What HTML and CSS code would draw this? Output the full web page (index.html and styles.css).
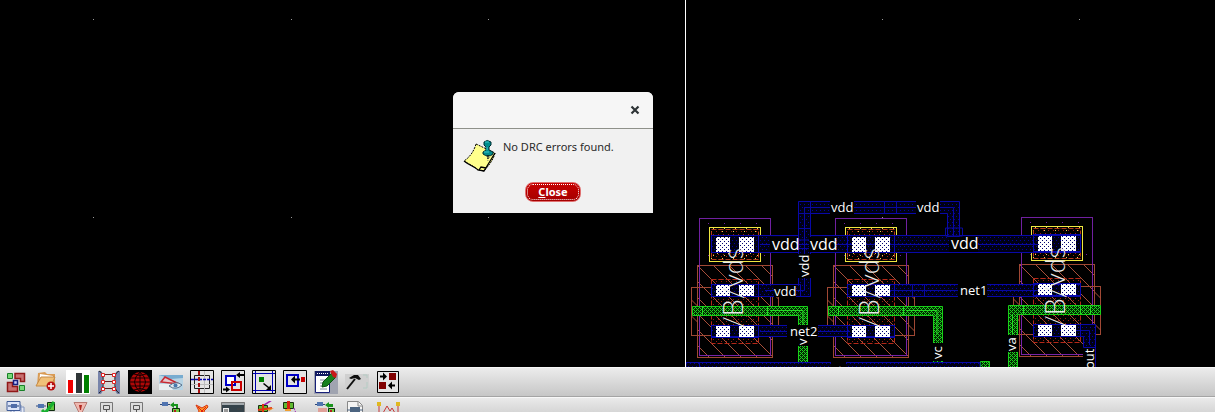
FILE: index.html
```html
<!DOCTYPE html>
<html lang="en">
<head>
<meta charset="utf-8">
<title>Layout editor</title>
<link rel="stylesheet" href="styles.css">
</head>
<body>
<main class="workspace">
  <section class="pane pane-left" aria-label="Layout view">
    <svg class="canvas" width="685" height="367" viewBox="0 0 685 367">
      <path class="grid" d="M93 19.500h1M291 19.500h1M488 19.500h1M93 217.500h1M291 217.500h1M488 217.500h1"/>
    </svg>
    <div class="dialog" role="dialog" aria-labelledby="message">
      <header class="dialog-head">
        <button class="dismiss" aria-label="Dismiss"><svg width="10" height="10" viewBox="0 0 10 10"><path d="M1.5 1.5l7 7M8.500 1.500l-7 7" stroke="#2e3436" stroke-width="2.200"/></svg></button>
      </header>
      <div class="dialog-body">
        <svg class="note" width="34" height="34" viewBox="0 0 34 34">
          <path d="M13 5L32 14C30 22 25 27 21 32L15 31C11 27 5 25 1 22C7 18 11 12 13 5Z" fill="#ffff8c" stroke="#000" stroke-dasharray="2 1"/>
          <path d="M1 22C6 26 12 28 15 31L21 32L32 14M16 31l2-3 5 1" fill="none" stroke="#000" stroke-width="1.300"/>
          <path d="M24 17l1 5M26 17l4-2M25 20l4-4" stroke="#777" stroke-dasharray="1 1"/>
          <path d="M21 3q3-3 7 0v3l-2 2v3l4 2v2q-5 4-10 0v-2l3-2V8l-2-2Z" fill="#008c8c" stroke="#002c30"/>
          <path d="M22 3h4M21 13h5M24 8v3" stroke="#38c8cc"/><path d="M25 16v4" stroke="#000"/>
        </svg>
        <p id="message">No DRC errors found.</p>
      </div>
      <footer class="dialog-foot"><button class="close"><span><u>C</u>lose</span></button></footer>
    </div>
  </section>
  <section class="pane pane-right" aria-label="Cell view">
    <svg class="canvas" width="529" height="367" viewBox="686 0 529 367">
      <defs>
        <pattern id="bluedots" width="4" height="6" patternUnits="userSpaceOnUse"><rect width="4" height="6" fill="#000014"/><path d="M0 .5h1M2 3.500h1" stroke="#0000a0"/></pattern>
        <pattern id="greendots" width="4" height="4" patternUnits="userSpaceOnUse"><rect width="4" height="4" fill="#002800"/><path d="M0 .5h1M2 .5h1M1 1.500h1M0 2.500h1M2 2.500h1M3 3.500h1" stroke="#20d020"/></pattern>
        <pattern id="whitedots" width="4" height="4" patternUnits="userSpaceOnUse"><rect width="4" height="4" fill="#fff"/><path d="M0 1.500h1M2 3.500h1" stroke="#000070"/></pattern>
        <pattern id="reddots" width="5" height="5" patternUnits="userSpaceOnUse"><path d="M1 1.500h1M3 4.500h1" stroke="#9c1c10"/></pattern>
        <pattern id="yellowdots" width="11" height="9" patternUnits="userSpaceOnUse"><path d="M2 1.500h1M7 6.500h1M9 3.500h1" stroke="#e8d060"/></pattern>
        <pattern id="hatch" width="16" height="16" patternUnits="userSpaceOnUse"><path d="M-1-1L17 17M-1 15L1 17M15-1L17 1" stroke="#a8503a"/></pattern>
        <g id="device">
          <rect x="699.5" y="218.5" width="71" height="137" fill="none" stroke="#7020a0"/>
          <path d="M708 223.500h1M724 223.500h1M740 223.500h1M756 223.500h1M708 255.500h1M764 255.500h1" stroke="#7020a0"/>
          <rect x="697.5" y="265.5" width="75" height="92" fill="url(#hatch)" stroke="#a04834"/>
          <path d="M699.500 265V355.500H770.500V265" fill="none" stroke="#7824a8"/>
          <rect x="691.5" y="287.500" width="87" height="48" fill="none" stroke="#a04834"/>
          <path d="M691.500 300l6 6M691.500 316l6 6M772.500 293l6 6M772.500 309l6 6M772.500 325l6 6" stroke="#a8503a"/>
          <rect x="711.5" y="279.500" width="47" height="64" fill="url(#reddots)" stroke="#b42818" stroke-dasharray="5 2"/>
          <rect x="709.5" y="227.500" width="51" height="34" fill="url(#yellowdots)" stroke="#f0e840"/>
          <rect x="711.5" y="229.500" width="47" height="30" fill="url(#reddots)" stroke="#b43818" stroke-dasharray="5 2"/>
        </g>
        <g id="contacts">
          <path d="M716 237h14v15h-14zM739 237h15v15h-15zM716 285h14v12h-14zM739 285h15v12h-15zM716 325h14v13h-14zM739 325h15v13h-15z" fill="url(#whitedots)"/>
          <rect x="711.500" y="235.500" width="47" height="17" class="wire-outline"/>
          <rect x="711.500" y="284.500" width="47" height="12" class="wire-outline"/>
          <rect x="711.500" y="325.500" width="47" height="12" class="wire-outline"/>
          <text class="cell" transform="translate(743 328) rotate(-90)">/B/vds</text>
        </g>
      </defs>
      <path class="grid" d="M882 19.500h1M1079 19.500h1M882 217.500h1M1079 217.500h1"/>
      <use href="#device"/><use href="#device" x="136"/><use href="#device" x="322" y="-1"/>
      <g class="poly">
        <path d="M692.500 306.500H807.500V368H798.500V315.500H692.500Z"/>
        <path d="M828.500 306.500H942.500V368H933.500V315.500H828.500Z"/>
        <path d="M1008.500 305.500H1100.500V314.500H1017.500V368H1008.500Z"/>
        <path d="M980.500 361.500h9v7h-9z"/>
      </g>
      <path d="M702.500 306v9M767.500 306v9M838.500 306v9M903.500 306v9M1023.500 305v9M1080.500 305v9M1090.500 305v9M770 310.500h33v24M907 310.500h30v24M1012.500 314v20" fill="none" stroke="#24dc24"/>
      <g class="metal">
        <path d="M711.500 235.500H1080.500V252.500H711.500Z"/>
        <path d="M798.500 201.500H959.500V236.500H947.500V213.500H810.500V296.500H798.500Z"/>
        <path d="M711.500 284.500H800.500V296.500H711.500ZM847.500 284.500H1080.500V296.500H847.500Z"/>
        <path d="M711.500 325.500H894.500V336.500H711.500Z"/>
        <path d="M1033.500 324.500H1095.500V347.500H1083.500V336.500H1033.500Z"/>
        <path d="M686 362.500H980V368H686Z"/>
      </g>
      <path class="center" d="M804.500 207V290.500H765M804.500 207.500H953.500V240M760 244.500H1040M890 290.500H1040M760 331.500H850M1075 330.500H1089.500V345M884.500 201v12M896.500 201v12M810.500 213V201M798.500 213.500h12M798.500 228.500h12M945.500 228h17v8h-17zM912.500 284v12M924.500 284v12M798.500 240h12M798.500 248.500h12M1095.500 347v20M699.500 362v5"/>
      <use href="#contacts"/><use href="#contacts" x="136"/><use href="#contacts" x="322" y="-1"/>
      <path fill="#000" d="M830 201h24v13h-24zM916 201h24v13h-24zM770 237h28v15h-28zM809 237h27v15h-27zM949 237h29v15h-29zM798 254h13v24h-13zM774 285h22v12h-22zM958 284h29v13h-29zM787 325h31v13h-31zM797 335h12v11h-12zM932 343h12v18h-12zM1007 335h12v17h-12zM1083 348h12v19h-12zM831 362h15v6h-15z"/>
      <g class="net">
        <text x="831" y="212">vdd</text><text x="917" y="212">vdd</text>
        <text class="wide" x="772" y="250">vdd</text><text class="wide" x="810" y="250">vdd</text><text class="wide" x="951" y="249">vdd</text>
        <text x="774" y="296">vdd</text><text x="960" y="295">net1</text><text x="790" y="336">net2</text>
        <text transform="translate(809 277) rotate(-90)">vdd</text>
        <text transform="translate(807 345) rotate(-90)">v</text>
        <text transform="translate(942 359) rotate(-90)">vc</text>
        <text transform="translate(1016 351) rotate(-90)">va</text>
        <text transform="translate(1094 369) rotate(-90)">out</text>
        <text x="838" y="375">t</text>
      </g>
    </svg>
  </section>
</main>

<nav class="toolbar" aria-label="Layout tools">
  <button aria-label="Hierarchy"><svg viewBox="0 0 25 25"><path d="M12 3.500h9.500v8h-4v-3H12zM4.500 12.500h5v4h5v5h-10z" fill="#c87070" stroke="#901818" stroke-width="1.500"/><path d="M4.500 3.500h5v5h-5zM16.500 15.500h5v5h-5z" fill="#78d878" stroke="#188028"/><path d="M10.500 10.500h4v4h-4z" fill="#c8ccff" stroke="#182080" stroke-width="1.500"/></svg></button>
  <button aria-label="Add folder"><svg viewBox="0 0 25 25"><path d="M3 16L4 3l7-1 2 2h8v11z" fill="#d99b54"/><path d="M6 4l13 2v9H5z" fill="#fff"/><path d="M2 16L7 7h14l-4 9z" fill="#f0c078" stroke="#c48a46"/><circle cx="17" cy="16" r="4.500" fill="#b81010"/><path d="M14 16h6M17 13v6" stroke="#fff" stroke-width="1.500"/></svg></button>
  <button aria-label="Statistics"><svg viewBox="0 0 25 25"><path d="M1 0h24v24H1z" fill="#fff"/><path d="M3 10h5v13H3z" fill="#f00000"/><path d="M11 3h6v20h-6z" fill="#303638"/><path d="M19 5h5v18h-5z" fill="#008000"/></svg></button>
  <button aria-label="Connectivity"><svg viewBox="0 0 25 25"><path d="M2 1h3l3 4-2 7 2 7-3 5H2zM24 1h-3l-3 4 2 7-2 7 3 5h3z" fill="#7884aa"/><path d="M3 1q5 2 4 11 1 8-4 11M23 1q-5 2-4 11-1 8 4 11" fill="none" stroke="#202020"/><path d="M7 4.500h12M7 11.500h12M7 18.500h12" stroke="#602020"/><path d="M5.500 3.500h3v3h-3zM16.500 3.500h3v3h-3zM5.500 10.500h3v3h-3zM16.500 10.500h3v3h-3zM5.500 17.500h3v3h-3zM16.500 17.500h3v3h-3z" fill="#fff" stroke="#e02020"/></svg></button>
  <button aria-label="Global nets"><svg viewBox="0 0 25 25"><path d="M1 0h24v24H1z"/><circle cx="13" cy="12" r="10" fill="#b00808"/><path d="M3 8h20M2 12h22M3 16h20M13 1v22M13 2Q2 12 13 22M13 2Q24 12 13 22M7 4q6 3 12 0M7 20q6-3 12 0" fill="none" stroke="#100000"/></svg></button>
  <button aria-label="Inspect net"><svg viewBox="0 0 25 25"><path d="M1 5h24v15H1z" fill="#b8d4e4"/><path d="M1 5h24v3L13 9z" fill="#78acd0"/><path d="M1 14h11l3 6H1z" fill="#e8eef0"/><path d="M3 12L7 7l14 7z" fill="#e4c8cc" stroke="#c82830" stroke-width="1.500"/><path d="M11 16q7-6 13-1-6 6-13 1" fill="#dce8f0" stroke="#54708c"/><circle cx="17.500" cy="15.500" r="2" fill="#4878ac"/></svg></button>
  <button aria-label="Align to axis"><svg viewBox="0 0 25 25"><path class="frame" d="M1.500 .5h23v23h-23z"/><path d="M5.500 5.500h15v13h-15z" fill="none" stroke="#202020"/><path d="M2 14.500h22M15.500 1v22" stroke="#bcbcbc"/><path d="M2 9.500h22" stroke="#0000b0" stroke-width="1.500" stroke-dasharray="3 1"/><path d="M10 1v23" stroke="#a81010" stroke-width="2" stroke-dasharray="4 2"/></svg></button>
  <button aria-label="Swap shapes"><svg viewBox="0 0 25 25"><path class="frame" d="M1.500 .5h23v23h-23z"/><path d="M6 6h9v9H6z" fill="#fff" stroke="#0000c8" stroke-width="2"/><path d="M12 12h9v8h-9z" fill="none" stroke="#c80000" stroke-width="2"/><path d="M16 5l4-3v2h4v2h-4v2zM10 19.500l-4-3v2H3v2h3v2z"/></svg></button>
  <button aria-label="Move to corner"><svg viewBox="0 0 25 25"><path class="frame" d="M1.500 .5h23v23h-23z"/><path d="M4.500 1v22M21.500 1v22M2 3.500h22M2 20.500h22" stroke="#0000b0"/><path d="M8 7h5v5H8z" fill="#008000"/><path d="M13 13l5 4 2-2v5h-5l2-2-5-4z"/></svg></button>
  <button aria-label="Merge shape"><svg viewBox="0 0 25 25"><path class="frame" d="M1.500 .5h23v23h-23z"/><path d="M5 5h11v11H5z" fill="none" stroke="#0000c8" stroke-width="2"/><path d="M19 7h4v5h-4z" fill="#c80000"/><path d="M9 9.500l4-4v3h5v2h-5v3z"/></svg></button>
  <button aria-label="Edit properties"><svg viewBox="0 0 25 25"><path d="M1 1h24v23H1z" fill="#a0a4b0"/><path d="M2.500 1.500h14v21h-14z" fill="#fff" stroke="#182078"/><path d="M2 1h15v5H2z" fill="#101860"/><path d="M4 3.500h12" stroke="#fff" stroke-dasharray="1 1"/><path d="M7 10h6M7 13h5M7 16h4M7 19h7" stroke="#8088a0"/><path d="M9 17l1-5 9-9 4 4-9 9z" fill="#168020" stroke="#0c5010"/><path d="M17 1l3-1 4 4-1 4-3-1z" fill="#c81818"/></svg></button>
  <button aria-label="Build"><svg viewBox="0 0 25 25"><path d="M1 4h24v15H1z" fill="#d0d0d0"/><path d="M3 19l8-10" stroke="#101010" stroke-width="2"/><path d="M5 8l5-3h4l3 4-2 1-4-2-4 1z" fill="#101010"/><path d="M19 5h4v3M19 18h4v-6" fill="none" stroke="#b4ccc4"/></svg></button>
  <button aria-label="Exchange cells"><svg viewBox="0 0 25 25"><path class="frame" d="M2.500 1.500h21v21h-21z"/><path d="M14 3h7v7h-7zM4 12h7v7H4z" fill="#800000"/><path d="M12 6.500l-4-4v3H5v2h3v3zM13 15.500l4-4v3h3v2h-3v3z"/></svg></button>
</nav>

<nav class="toolbar toolbar-lower" aria-label="Schematic tools">
  <button aria-label="Copy instance"><svg viewBox="0 0 25 25"><path d="M8 4h10v10H8zM11 6h10v9H11z" fill="#e4e8f4" stroke="#8094bc"/><path d="M4 .5h13v9H4z" fill="#dce4f8" stroke="#405c98"/><path d="M5 5h3M13 5h3" stroke="#203c70"/><path d="M8 3h6v4H8z" fill="#506ca8"/></svg></button>
  <button aria-label="Check instance"><svg viewBox="0 0 25 25"><path d="M2 5h10" stroke="#304878"/><path d="M4 3h6v4H4z" fill="#5074b0"/><path d="M13.500 1.500h7v8h-7z" fill="#60c840" stroke="#102c10"/><path d="M16 3v5" stroke="#b02020" stroke-width="2"/><path d="M8 9l3 3 9-11" fill="none" stroke="#18b030" stroke-width="3"/></svg></button>
  <button aria-label="Warnings"><svg viewBox="0 0 25 25"><path d="M9 1.500h13l-6.500 13z" fill="#efb8b0" stroke="#b87870"/><path d="M14 4h3l-1 5h-1z" fill="#b02820"/></svg></button>
  <button aria-label="Symbol view"><svg viewBox="0 0 25 25"><path d="M4.500 1.500h12v13h-12z" fill="#ddd" stroke="#777"/><path d="M7.500 4.500h6v4h-6zM10.500 8v5M7 11.500h4" fill="none" stroke="#555"/></svg></button>
  <button aria-label="Schematic view"><svg viewBox="0 0 25 25"><path d="M3.500 1.500h12v13h-12z" fill="#ddd" stroke="#777"/><path d="M6.500 4.500h6v4h-6zM9.500 8v5M6 11.500h4" fill="none" stroke="#555"/></svg></button>
  <button aria-label="Update instance"><svg viewBox="0 0 25 25"><path d="M2 3.500h10" stroke="#304878"/><path d="M4 1h6v4H4z" fill="#5074b0"/><path d="M12 4l4-3v2h4v4h-2V5h-2v2z" fill="#18941c"/><path d="M14.500 7.500h7v8h-7z" fill="#70c840" stroke="#102c10"/><path d="M17 9v5" stroke="#b02020" stroke-width="2"/></svg></button>
  <button aria-label="Delete markers"><svg viewBox="0 0 25 25"><path d="M7 4l6 3 5-3 1 2-4 4 2 5H8l2-5z" fill="#ff9a28" stroke="#d83010"/><path d="M9 6l7 7M17 6l-7 7" stroke="#e02010"/></svg></button>
  <button aria-label="Console"><svg viewBox="0 0 25 25"><path d="M1.500 1.500h23v13h-23z" fill="#34424a" stroke="#777"/><path d="M2 2h22v2H2z" fill="#a4aaae"/><path d="M3 7h6v8H3z" fill="#eee"/><path d="M4 9h4M4 11h4M17 8h5" stroke="#444"/></svg></button>
  <button aria-label="Route"><svg viewBox="0 0 25 25"><path d="M10 6L21-1" stroke="#a020b0" stroke-width="1.500"/><path d="M7.500 4.500h9v6h-9z" fill="#60b830" stroke="#183010"/><path d="M12 3v9M7 9l14-2" stroke="#e03010" stroke-width="2"/><path d="M16 8l7-1-5 3z" fill="#f09020"/></svg></button>
  <button aria-label="Unroute"><svg viewBox="0 0 25 25"><path d="M1.500 1.500h10v6h-10z" fill="#60b830" stroke="#183010"/><path d="M5 0h3v9H5z" fill="#d82010"/><path d="M12 7l3 8" stroke="#a020b0" stroke-dasharray="2 1"/><path d="M3 8h6v2H3z" fill="#f0a030"/></svg></button>
  <button aria-label="Replace instance"><svg viewBox="0 0 25 25"><path d="M2 3.500h10" stroke="#304878"/><path d="M4 1h6v4H4z" fill="#5074b0"/><path d="M12 4l4-3v2h4v3h-4v1z" fill="#18941c"/><path d="M5 7h9v8H5z" fill="#e0a098"/><path d="M15.500 7.500h6v8h-6z" fill="#70c840" stroke="#102c10"/><path d="M18 9v5" stroke="#b02020" stroke-width="2"/></svg></button>
  <button aria-label="Print"><svg viewBox="0 0 25 25"><path d="M3.500 .5h11l4 4v11h-15z" fill="#f4f4f4" stroke="#888"/><path d="M14 1v4h4" fill="none" stroke="#888"/><path d="M6 6h10v6H6z" fill="#4c6480"/><path d="M3 9h4M15 9h4" stroke="#4c6480"/></svg></button>
  <button aria-label="Waveform"><svg viewBox="0 0 25 25"><path d="M4 3v9h4l4-7 3 5 2-3 3 5h3V3" fill="none" stroke="#c83838"/><path d="M2 1h4v4H2zM21 1h4v4h-4z" fill="#e0b820"/></svg></button>
</nav>
</body>
</html>
```
FILE: styles.css
```css
* { box-sizing: border-box; }

body {
  margin: 0;
  height: 100vh;
  display: flex;
  flex-direction: column;
  overflow: hidden;
  background: #000;
  color: #2a2a2a;
  font-family: "Noto Sans", "Open Sans", sans-serif;
}

button { font: inherit; padding: 0; border: 0; background: none; }
button svg { display: block; }

.workspace {
  flex: 1;
  min-height: 0;
  display: grid;
  grid-template-columns: 685fr 530fr;
}

.pane { position: relative; overflow: hidden; }
.pane-right { border-left: 1px solid #fff; }
.canvas { display: block; }

.grid { stroke: #999; }
.wire-outline { fill: none; stroke: #0808b0; }
.metal { fill: url(#bluedots); stroke: #0808a8; }
.center { fill: none; stroke: #0808a0; }
.poly { fill: url(#greendots); stroke: #18d018; }
.net { fill: #fff; font-size: 13px; font-family: "Open Sans", "Noto Sans", sans-serif; }
.wide { font-size: 16px; }
.cell { fill: #e8e8e8; font-size: 27px; font-weight: 300; font-family: Lato, "Open Sans", sans-serif; }

.dialog {
  position: absolute;
  left: 453px;
  top: 92px;
  width: 200px;
  background: #f1f1f1;
  border-radius: 6px 6px 0 0;
}

.dialog-head {
  height: 37px;
  padding: 0 13px;
  display: flex;
  align-items: center;
  justify-content: flex-end;
  background: #f6f6f6;
  border-bottom: 1px solid #8f918a;
  border-radius: 6px 6px 0 0;
}

.dialog-body {
  display: flex;
  gap: 6px;
  padding: 10px 10px 0;
}

.dialog-body p { margin: 0; font-size: 11px; line-height: 16px; white-space: nowrap; }
.dialog-foot { display: flex; justify-content: center; padding: 9px 0 11px; }

.close {
  width: 56px;
  height: 20px;
  padding: 2px;
  border: 1px solid #e07070;
  border-radius: 8px;
  background: linear-gradient(#c80000, #a40000);
  color: #fff;
  font-size: 11px;
  font-weight: 700;
}

.close span {
  display: block;
  height: 14px;
  line-height: 13px;
  outline: 1px dotted #fff;
  border-radius: 5px;
}

.toolbar {
  flex: none;
  display: flex;
  align-items: center;
  height: 30px;
  border-top: 1px solid #f8f8f8;
  border-bottom: 1px solid #a4a4a4;
  background: linear-gradient(#ececec, #c6c6c6);
}

.toolbar button { width: 31px; padding: 0 3px; }
.toolbar svg { width: 25px; height: 25px; }

.toolbar-lower {
  height: 15px;
  align-items: flex-start;
  padding-top: 3px;
  border-bottom: 0;
  overflow: hidden;
  background: linear-gradient(#eaeaea, #d6d6d6);
}

.frame { fill: #e4e4e4; stroke: #000; stroke-width: 1px; }
```
